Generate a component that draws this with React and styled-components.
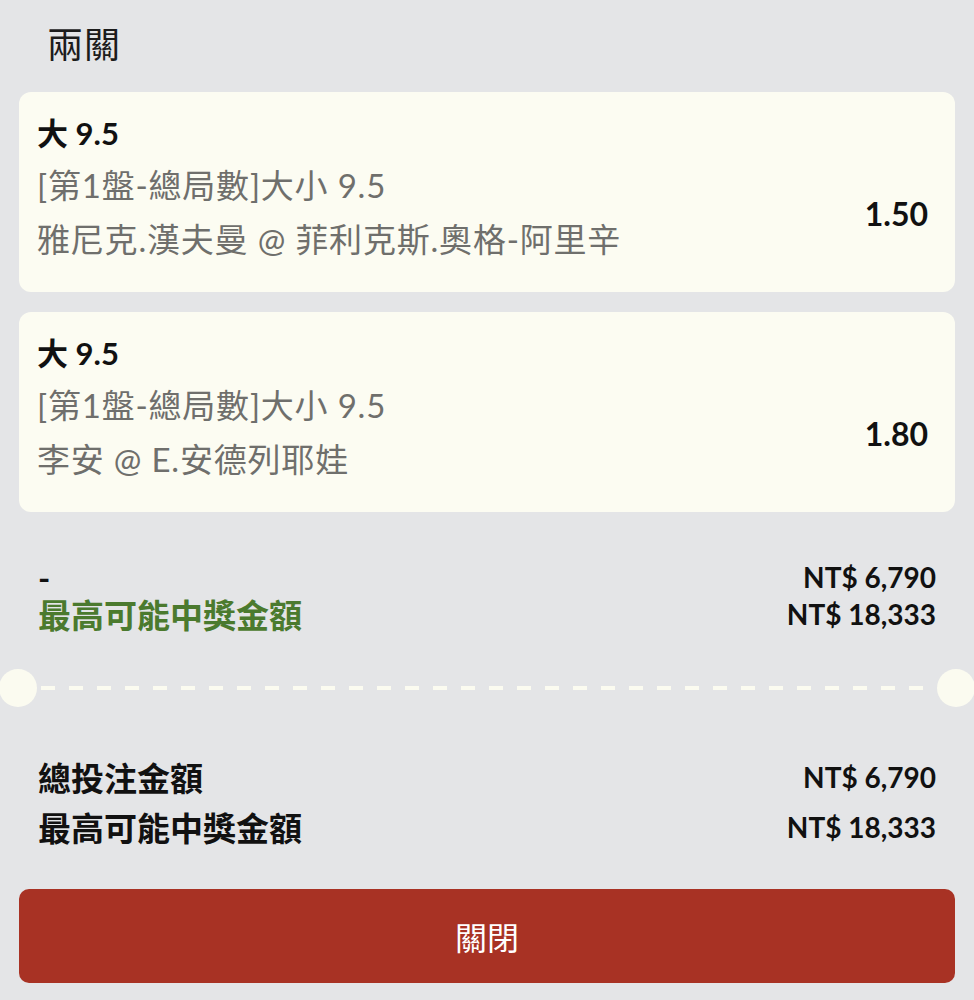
import React from "react";
import styled, { createGlobalStyle } from "styled-components";

const Global = createGlobalStyle`
  html, body { margin: 0; padding: 0; background: #e4e5e7; }
  body { overflow-x: hidden; font-family: Lato, "Noto Sans CJK TC", sans-serif; }
`;

const Page = styled.div`
  width: 974px;
  min-height: 1000px;
  background: #e4e5e7;
  display: flex;
  flex-direction: column;
  overflow: hidden;
`;

const Title = styled.div`
  padding: 24px 0 0 47px;
  height: 40px;
  line-height: 40px;
  font-size: 36px;
  color: #1c1c1c;
  font-weight: 400;
  letter-spacing: 1px;
`;

const CardList = styled.div`
  margin-top: 28px;
  padding: 0 19px;
  display: flex;
  flex-direction: column;
  gap: 20px;
`;

const Card = styled.div`
  height: 200px;
  box-sizing: border-box;
  background: #fcfcf2;
  border-radius: 12px;
  padding: 15px 27px 0 18px;
  display: flex;
  align-items: center;
`;

const CardBody = styled.div`
  flex: 1;
  align-self: flex-start;
  display: flex;
  flex-direction: column;
`;

const Pick = styled.div`
  font-size: 31px;
  font-weight: 700;
  line-height: 52px;
  color: #111;
`;

const Info = styled.div`
  font-size: 33px;
  line-height: ${(p) => p.$lh || 52}px;
  color: #6f6f6c;
  letter-spacing: 0.8px;
`;

const Odds = styled.div`
  font-size: 32px;
  font-weight: 700;
  color: #111;
  margin-top: 28px;
`;

const Rows = styled.div`
  margin-top: ${(p) => p.$mt}px;
  padding: 0 38px;
  display: flex;
  flex-direction: column;
`;

const Row = styled.div`
  display: flex;
  justify-content: space-between;
  align-items: center;
  height: ${(p) => p.$h}px;
`;

const Label = styled.div`
  font-size: 33px;
  font-weight: 700;
  color: ${(p) => p.$color || "#111"};
`;

const Amount = styled.div`
  font-size: 28px;
  font-weight: 700;
  color: #111;
`;

const Separator = styled.div`
  margin: 37px -1px 0;
  height: 38px;
  display: flex;
  align-items: center;
`;

const Notch = styled.div`
  width: 38px;
  height: 38px;
  border-radius: 50%;
  background: #fbfbf0;
  flex: none;
`;

const Dashes = styled.div`
  flex: 1;
  height: 4px;
  margin: 0 4px;
  background: repeating-linear-gradient(
    to right,
    #fbfbf0 0 14px,
    transparent 14px 28px
  );
`;

const Button = styled.button`
  margin: 37px 19px 0;
  height: 94px;
  border: none;
  border-radius: 10px;
  background: #a83224;
  color: #fff;
  font-family: Lato, "Noto Sans CJK TC", sans-serif;
  font-size: 32px;
  font-weight: 400;
  cursor: pointer;
`;

const legs = [
  { market: "[第1盤-總局數]大小 9.5", match: "雅尼克.漢夫曼 @ 菲利克斯.奧格-阿里辛", odds: "1.50" },
  { market: "[第1盤-總局數]大小 9.5", match: "李安 @ E.安德列耶娃", odds: "1.80" },
];

export default function App() {
  return (
    <>
      <Global />
      <Page>
        <Title>兩關</Title>
        <CardList>
          {legs.map((l, i) => (
            <Card key={i}>
              <CardBody>
                <Pick>大 9.5</Pick>
                <Info>{l.market}</Info>
                <Info $lh={56}>{l.match}</Info>
              </CardBody>
              <Odds>{l.odds}</Odds>
            </Card>
          ))}
        </CardList>
        <Rows $mt={46}>
          <Row $h={37}>
            <Label>-</Label>
            <Amount>NT$ 6,790</Amount>
          </Row>
          <Row $h={37}>
            <Label $color="#4b7a2e">最高可能中獎金額</Label>
            <Amount>NT$ 18,333</Amount>
          </Row>
        </Rows>
        <Separator>
          <Notch />
          <Dashes />
          <Notch />
        </Separator>
        <Rows $mt={45}>
          <Row $h={50}>
            <Label>總投注金額</Label>
            <Amount>NT$ 6,790</Amount>
          </Row>
          <Row $h={50}>
            <Label>最高可能中獎金額</Label>
            <Amount>NT$ 18,333</Amount>
          </Row>
        </Rows>
        <Button>關閉</Button>
      </Page>
    </>
  );
}
